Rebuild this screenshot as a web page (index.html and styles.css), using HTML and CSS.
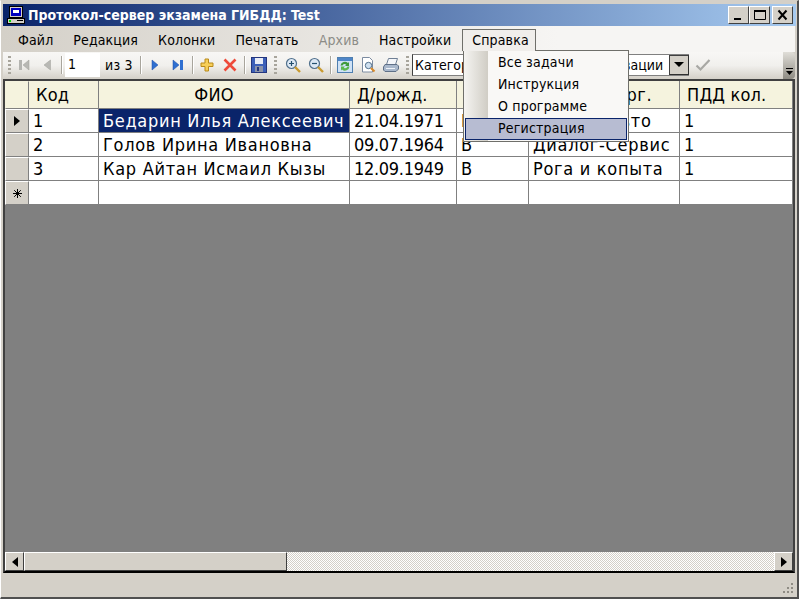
FILE: index.html
```html
<!DOCTYPE html>
<html lang="ru">
<head>
<meta charset="utf-8">
<title>Протокол-сервер экзамена ГИБДД: Test</title>
<link rel="stylesheet" href="styles.css">
</head>
<body>
<div class="window">
  <header class="titlebar">
    <svg class="appicon" width="18" height="18" viewBox="0 0 18 18"><rect x="2.500" y="0.500" width="13" height="11" fill="#d4d0c8" stroke="#000"/><rect x="4" y="2" width="10" height="8" fill="#0000c0"/><rect x="6" y="4" width="6" height="3" fill="#fff"/><rect x="0.500" y="12.500" width="17" height="5" fill="#d4d0c8" stroke="#000"/><rect x="2" y="14" width="2" height="2" fill="#00e000"/><rect x="10" y="14" width="6" height="1" fill="#000"/></svg>
    <span class="title">Протокол-сервер экзамена ГИБДД: Test</span>
    <div class="capbtns">
      <span class="capbtn"><svg width="16" height="14" viewBox="0 0 16 14"><rect x="3" y="10" width="7" height="2" fill="#000"/></svg></span>
      <span class="capbtn"><svg width="16" height="14" viewBox="0 0 16 14"><path d="M2.500 2.500h11v9h-11z" fill="none" stroke="#000"/><rect x="2" y="2" width="12" height="2" fill="#000"/></svg></span>
      <span class="capbtn cap-close"><svg width="16" height="14" viewBox="0 0 16 14"><path d="M3.500 2.500l8 9M11.500 2.500l-8 9" stroke="#000" stroke-width="2" fill="none"/></svg></span>
    </div>
  </header>

  <nav class="menubar">
    <span class="menu">Файл</span>
    <span class="menu">Редакция</span>
    <span class="menu">Колонки</span>
    <span class="menu">Печатать</span>
    <span class="menu disabled">Архив</span>
    <span class="menu">Настройки</span>
    <span class="menu open">Справка</span>
  </nav>

  <div class="toolbar">
    <span class="grip"></span>
    <span class="tb"><svg width="16" height="16" viewBox="0 0 16 16"><rect x="3" y="3" width="3" height="10" fill="#b4b4b0"/><path d="M13 3v10L7 8z" fill="#b8b8b4" stroke="#a0a09a" stroke-width=".5"/></svg></span>
    <span class="tb"><svg width="16" height="16" viewBox="0 0 16 16"><path d="M11.500 3v10L5 8z" fill="#b8b8b4" stroke="#a0a09a" stroke-width=".5"/></svg></span>
    <span class="sep sep-input"></span>
    <span class="pageinput">1</span>
    <span class="oflabel">из 3</span>
    <span class="sep"></span>
    <span class="tb"><svg width="16" height="16" viewBox="0 0 16 16"><path d="M5 3v10l6-5z" fill="#2f6fd0" stroke="#1f4fa8" stroke-width=".5"/></svg></span>
    <span class="tb"><svg width="16" height="16" viewBox="0 0 16 16"><path d="M3 3v10l6-5z" fill="#2f6fd0" stroke="#1f4fa8" stroke-width=".5"/><rect x="10" y="3" width="3" height="10" fill="#2f6fd0"/></svg></span>
    <span class="sep"></span>
    <span class="tb"><svg width="16" height="16" viewBox="0 0 16 16"><path d="M6 2h3.500v4H14v3.500H9.500V14H6V9.500H2V6h4z" fill="#f7cf58" stroke="#b98a1a"/></svg></span>
    <span class="tb"><svg width="16" height="16" viewBox="0 0 16 16"><path d="M2.500 2.500l11 11M13.500 2.500l-11 11" stroke="#ee4a3a" stroke-width="2.600" fill="none"/></svg></span>
    <span class="sep"></span>
    <span class="tb"><svg width="16" height="16" viewBox="0 0 16 16"><rect x="0.500" y="0.500" width="15" height="15" fill="#3c5fb8" stroke="#24367e"/><rect x="4" y="1" width="8" height="6" fill="#e8ecf6"/><rect x="4" y="9" width="8" height="6" fill="#8a92a8"/><rect x="6" y="10" width="2" height="4" fill="#24367e"/></svg></span>
    <span class="sep gripsep"></span>
    <span class="tb"><svg width="16" height="16" viewBox="0 0 16 16"><circle cx="6.500" cy="6.500" r="5" fill="#dce8f4" stroke="#51708c" stroke-width="1.200"/><path d="M10 10l5 5" stroke="#c89a30" stroke-width="2.400"/><path d="M4 6.500h5M6.500 4v5" stroke="#24506e" stroke-width="1.200"/></svg></span>
    <span class="tb"><svg width="16" height="16" viewBox="0 0 16 16"><circle cx="6.500" cy="6.500" r="5" fill="#dce8f4" stroke="#51708c" stroke-width="1.200"/><path d="M10 10l5 5" stroke="#c89a30" stroke-width="2.400"/><path d="M4 6.500h5" stroke="#24506e" stroke-width="1.200"/></svg></span>
    <span class="sep"></span>
    <span class="tb"><svg width="16" height="16" viewBox="0 0 16 16"><rect x="0.500" y="0.500" width="15" height="15" fill="#cfe2f6" stroke="#4f7fb0"/><rect x="1" y="1" width="14" height="3" fill="#4f86c8"/><path d="M3.500 8.500a4.500 4.500 0 0 1 7.500-2.500l1-1v4H8l1.300-1.300A2.700 2.700 0 0 0 5.500 8.500z" fill="#3f9a3c"/><path d="M12.500 9.500a4.500 4.500 0 0 1-7.500 3l-1 1v-4h4l-1.300 1.300a2.700 2.700 0 0 0 3.800-1.300z" fill="#5cb84e"/></svg></span>
    <span class="tb"><svg width="16" height="16" viewBox="0 0 16 16"><path d="M2.500 0.500h7l3 3v11.500h-10z" fill="#fff" stroke="#7c8ba0"/><circle cx="8.500" cy="8.500" r="3.200" fill="#cfe0f0" stroke="#52708c"/><path d="M11 11l3.500 3.500" stroke="#d88a2c" stroke-width="2.200"/></svg></span>
    <span class="tb"><svg width="16" height="16" viewBox="0 0 16 16"><path d="M5.500 1.500h9l-2 6h-9z" fill="#f4f6fa" stroke="#6f7f94"/><path d="M2 7.500h12l1.500 1.500v3l-2.500 2.500H2L.500 13v-3z" fill="#a9b8cc" stroke="#5f7088"/><rect x="3" y="11" width="9" height="1" fill="#eef2f8"/></svg></span>
    <span class="sep gripsep gripsep-last"></span>
    <div class="combo">
      <span class="combotext">Категория водителей для активации</span>
      <span class="combobtn"><svg width="10" height="6" viewBox="0 0 10 6"><path d="M0 0h10L5 5z" fill="#000"/></svg></span>
    </div>
    <span class="tb check"><svg width="16" height="16" viewBox="0 0 16 16"><path d="M1.500 8.500l4 4L14.500 3" fill="none" stroke="#a8a8a4" stroke-width="2.200"/></svg></span>
    <span class="overflow"><svg width="7" height="8" viewBox="0 0 7 8"><path d="M0 0h7v1H0zM0 3h7L3.500 7z" fill="#000"/></svg></span>
  </div>

  <main class="gridpane">
    <div class="table">
      <div class="rhead hcorner"></div>
      <div class="th">Код</div>
      <div class="th center">ФИО</div>
      <div class="th">Д/рожд.</div>
      <div class="th">Кат.</div>
      <div class="th wide">Наимен. орг.</div>
      <div class="th">ПДД кол.</div>

      <div class="rhead"><svg width="6" height="10" viewBox="0 0 6 10"><path d="M0 0l6 5-6 5z" fill="#000"/></svg></div>
      <div class="td">1</div>
      <div class="td selected">Бедарин Илья Алексеевич</div>
      <div class="td num">21.04.1971</div>
      <div class="td">В</div>
      <div class="td">ООО Ив-Авто</div>
      <div class="td">1</div>

      <div class="rhead"></div>
      <div class="td">2</div>
      <div class="td">Голов Ирина Ивановна</div>
      <div class="td num">09.07.1964</div>
      <div class="td">В</div>
      <div class="td">Диалог-Сервис</div>
      <div class="td">1</div>

      <div class="rhead"></div>
      <div class="td">3</div>
      <div class="td">Кар Айтан Исмаил Кызы</div>
      <div class="td num">12.09.1949</div>
      <div class="td">В</div>
      <div class="td">Рога и копыта</div>
      <div class="td">1</div>

      <div class="rhead"><svg width="9" height="9" viewBox="0 0 9 9"><path d="M4.500 0v9M0 4.500h9M1.200 1.200l6.600 6.600M7.800 1.200l-6.600 6.600" stroke="#000" fill="none"/></svg></div>
      <div class="td"></div>
      <div class="td"></div>
      <div class="td"></div>
      <div class="td"></div>
      <div class="td"></div>
      <div class="td"></div>
    </div>
    <div class="hscroll">
      <span class="sbtn"><svg width="6" height="10" viewBox="0 0 6 10"><path d="M6 0L0 5l6 5z" fill="#000"/></svg></span>
      <span class="thumb"></span>
      <span class="track"></span>
      <span class="sbtn"><svg width="6" height="10" viewBox="0 0 6 10"><path d="M0 0l6 5-6 5z" fill="#000"/></svg></span>
    </div>
  </main>

  <footer class="status">
    <svg class="sizegrip" width="12" height="12" viewBox="0 0 12 12"><path d="M9 1h2v2H9zM5 5h2v2H5zM9 5h2v2H9zM1 9h2v2H1zM5 9h2v2H5zM9 9h2v2H9z" fill="#8f8c84"/></svg>
  </footer>

  <div class="dropdown">
    <div class="ditem">Все задачи</div>
    <div class="ditem">Инструкция</div>
    <div class="ditem">О программе</div>
    <div class="ditem active">Регистрация</div>
  </div>
</div>
</body>
</html>
```

FILE: styles.css
```css
* { box-sizing: border-box; }
html, body { margin: 0; padding: 0; }
body { width: 799px; height: 599px; overflow: hidden; background: #d4d0c8; }

.window {
  position: relative;
  width: 799px;
  height: 599px;
  display: flex;
  flex-direction: column;
  padding: 3px 2px 0 2px;
  background: #d4d0c8;
  border-top: 1px solid #d4d0c8;
  border-left: 1px solid #fff;
  border-right: 2px solid #505050;
  border-bottom: 2px solid #505050;
  font-family: "DejaVu Sans Condensed", "DejaVu Sans", sans-serif;
  font-stretch: condensed;
  color: #000;
}

.titlebar {
  height: 22px;
  margin-right: -1px;
  flex: none;
  display: flex;
  align-items: center;
  padding: 0 3px 0 4px;
  background: linear-gradient(90deg, #0a246a, #a6caf0);
}
.appicon { flex: none; margin-right: 3px; }
.title { color: #fff; font-weight: bold; font-size: 14px; white-space: nowrap; }
.capbtns { margin-left: auto; display: flex; }
.capbtn {
  width: 21px; height: 18px; display: flex; align-items: center; justify-content: center;
  background: #d4d0c8;
  border: 1px solid; border-color: #fff #404040 #404040 #fff;
}
.cap-close { margin-left: 2px; }

.menubar {
  height: 26px;
  flex: none;
  display: flex;
  align-items: flex-end;
  padding-left: 6px;
  background: linear-gradient(90deg, #d4d0c8, #f6f5f3 70%);
  font-size: 14px;
  letter-spacing: .13px;
}
.menu { height: 23px; padding: 3px 9px 0; margin-right: 2px; white-space: nowrap; }
.menu.disabled { color: #8c8c86; }
.menu.open {
  position: relative;
  z-index: 3;
  width: 74px;
  height: 22px;
  margin-bottom: 1px;
  background: #f0eeeb;
  border: 1px solid #6f6f6a;
  border-bottom: none;
  padding-top: 2px;
}

.toolbar {
  height: 27px;
  flex: none;
  display: flex;
  align-items: center;
  padding: 0 0 1px 5px;
  background: linear-gradient(180deg, #f8f7f5, #f1f0ed 50%, #d4d0c8);
  border-radius: 0 6px 6px 0;
  position: relative;
}
.grip { width: 3px; height: 18px; margin-right: 1px; flex: none; background: repeating-linear-gradient(180deg, #a8a59c 0 2px, transparent 2px 4px); }
.tb { width: 23px; height: 22px; display: flex; align-items: center; justify-content: center; flex: none; }
.sep { width: 1px; height: 18px; margin: 0 2px 0 3px; background: #a8a59c; box-shadow: 1px 0 0 #fff; flex: none; }
.sep-input { margin-right: 3px; }
.gripsep { width: 3px; margin: 0 4px 0 4px; background: repeating-linear-gradient(180deg, #a8a59c 0 2px, transparent 2px 4px); box-shadow: none; }
.gripsep-last { margin: 0 3px 0 4px; }
.pageinput { width: 35px; height: 24px; background: #fff; font-size: 14px; padding: 3px 3px; flex: none; }
.oflabel { width: 37px; font-size: 14px; padding-left: 5px; letter-spacing: .2px; white-space: nowrap; flex: none; }
.combo { width: 277px; height: 22px; background: #fff; display: flex; align-items: center; border: 1px solid #808080; border-left-color: #404040; border-right: none; flex: none; }
.combotext { flex: 1; font-size: 14px; padding-left: 2px; white-space: nowrap; overflow: hidden; }
.combobtn { width: 20px; height: 20px; display: flex; align-items: center; justify-content: center; background: #d4d0c8; border: 1px solid; border-color: #404040 #303030 #303030 #404040; flex: none; }
.check { margin-left: 2px; }
.overflow {
  position: absolute; right: 0; top: 0; bottom: 0; width: 12px;
  display: flex; align-items: flex-end; justify-content: center; padding-bottom: 3px;
  background: linear-gradient(180deg, #e0ded8, #8f8c84);
  border-radius: 0 4px 4px 0;
}

.gridpane {
  flex: 1;
  min-height: 0;
  display: flex;
  flex-direction: column;
  background: #808080;
  border: 2px solid #404040;
  border-bottom-color: #000;
}
.table {
  display: grid;
  grid-template-columns: 24px 70px 251px 107px 72px 151px 113px;
  grid-template-rows: 28px 24px 24px 24px 24px;
  flex: none;
  font-size: 18px;
}
.th {
  background: #f5f3de;
  padding: 3px 0 0 7px;
  border-right: 1px solid #808080;
  border-bottom: 1px solid #808080;
  letter-spacing: .2px;
  white-space: nowrap;
  overflow: hidden;
}
.th.wide { letter-spacing: .55px; }
.th.center { text-align: center; padding: 3px 20px 0 0; }
.td {
  background: #fff;
  padding: 1px 0 0 4px;
  border-right: 1px solid #808080;
  border-bottom: 1px solid #808080;
  letter-spacing: .7px;
  white-space: nowrap;
  overflow: hidden;
}
.td.num { letter-spacing: -.3px; }
.td.selected { background: #0a246a; color: #fff; }
.rhead {
  background: #d4d0c8;
  border: 1px solid; border-color: #fff #808080 #808080 #fff;
  display: flex; align-items: center; justify-content: center;
}
.hcorner { background: #f5f3de; border-color: #f5f3de #808080 #808080 #f5f3de; }

.hscroll {
  margin-top: auto;
  height: 19px;
  display: flex;
  flex: none;
}
.sbtn {
  width: 19px; flex: none; display: flex; align-items: center; justify-content: center;
  background: #d4d0c8;
  border: 1px solid; border-color: #fff #404040 #404040 #fff;
}
.thumb {
  width: 263px; flex: none;
  background: #d4d0c8;
  border: 1px solid; border-color: #fff #404040 #404040 #fff;
}
.track {
  flex: 1;
  background: repeating-conic-gradient(#d4d0c8 0 25%, #fff 0 50%) 0 0 / 2px 2px;
}

.status { height: 24px; flex: none; display: flex; justify-content: flex-end; align-items: flex-end; padding: 0 1px 3px 0; }

.dropdown {
  position: absolute;
  left: 462px;
  top: 49px;
  width: 166px;
  height: 92px;
  z-index: 2;
  padding: 1px;
  background: linear-gradient(90deg, #f5f4f1, #d0cdc5 24px, #f9f8f6 24px);
  border: 1px solid #6f6f6a;
  font-size: 14px;
  letter-spacing: .2px;
}
.ditem { height: 22px; padding: 2px 0 0 33px; white-space: nowrap; }
.ditem.active { background: #b7bcd2; border: 1px solid #0a246a; padding: 1px 0 0 32px; }
```
